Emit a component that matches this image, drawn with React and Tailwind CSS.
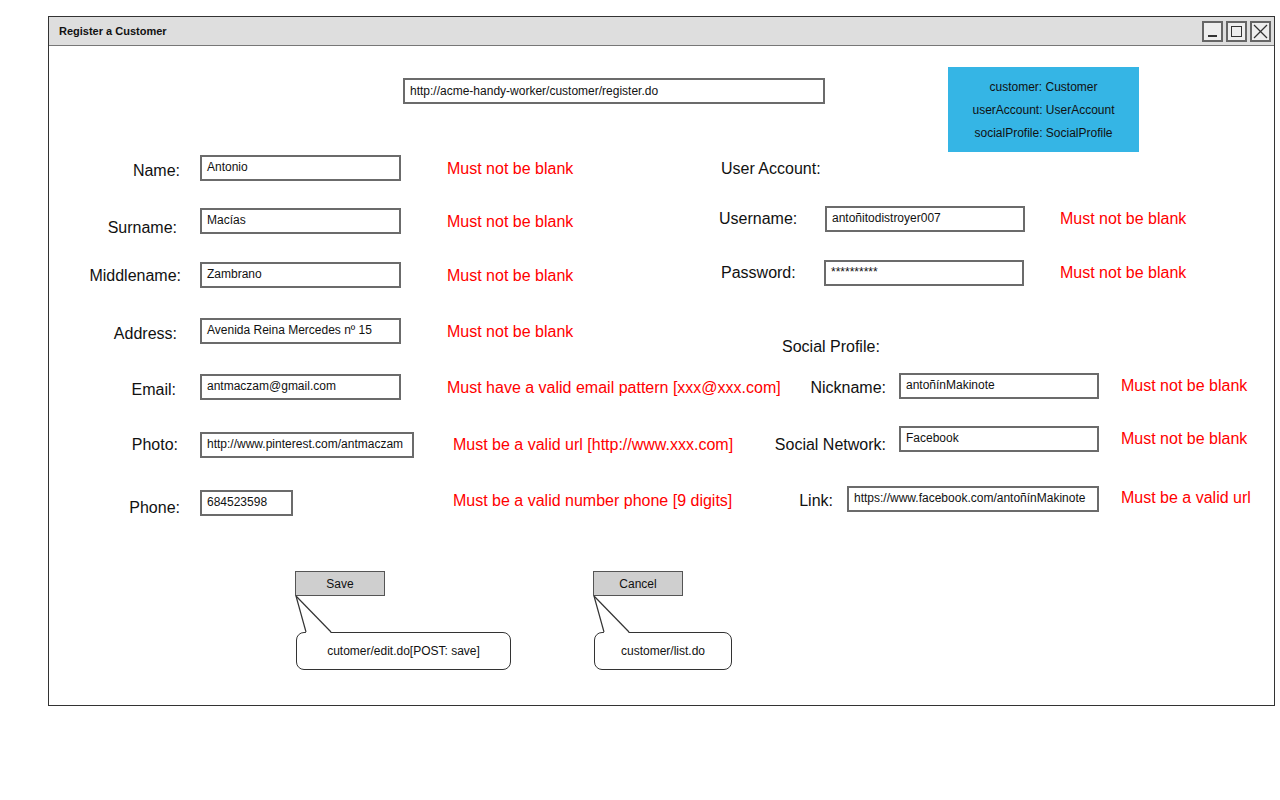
import React from "react";

const font = "font-['Liberation_Sans',Arial,sans-serif]";

function Field({ value, className = "" }) {
  return (
    <div
      className={`h-[26px] shrink-0 border-2 border-[#6b6b6b] bg-white pl-[5px] pb-[3px] flex items-center text-[12px] text-[#111] whitespace-nowrap overflow-hidden ${className}`}
    >
      {value}
    </div>
  );
}

function Label({ children, className = "" }) {
  return (
    <div className={`shrink-0 text-[16px] leading-[20px] text-[#111] whitespace-nowrap ${className}`}>
      {children}
    </div>
  );
}

function Err({ children, className = "" }) {
  return (
    <div className={`shrink-0 text-[16px] leading-[20px] text-[#ff0000] whitespace-nowrap ${className}`}>
      {children}
    </div>
  );
}

function Callout({ label, note, noteWidth }) {
  return (
    <div className="relative flex flex-col">
      <div className="w-[90px] h-[25px] bg-[#cfcfcf] border-[1.5px] border-[#555] flex items-center justify-center text-[12px] text-[#111]">
        {label}
      </div>
      <div
        className={`mt-[36px] ml-[1px] h-[38px] border-[1.5px] border-[#333] rounded-[8px] bg-white flex items-center justify-center text-[12px] text-[#111] ${noteWidth}`}
      >
        {note}
      </div>
      <svg
        className="absolute left-0 top-[24px]"
        width="40"
        height="38"
        viewBox="0 0 40 38"
      >
        <polygon points="1,1 11,38 36,38" fill="white" />
        <line x1="1" y1="1" x2="11" y2="37" stroke="#333" strokeWidth="1.2" />
        <line x1="1" y1="1" x2="36" y2="37" stroke="#333" strokeWidth="1.2" />
      </svg>
    </div>
  );
}

export default function App() {
  return (
    <div className={`w-[1280px] h-[800px] bg-white ${font}`}>
      <div className="pt-[16px] pl-[48px]">
        <div className="w-[1227px] h-[690px] border-[1.5px] border-[#333] flex flex-col">
          {/* title bar */}
          <div className="h-[29px] bg-[#dedede] border-b border-[#777] flex items-center justify-between pl-[10px] pr-[3px]">
            <span className="text-[11px] font-bold text-[#111]">Register a Customer</span>
            <div className="flex gap-[3px]">
              <div className="w-[21px] h-[21px] border-2 border-[#666] bg-[#eee] flex items-end justify-center pb-[3px]">
                <div className="w-[9px] h-[2px] bg-[#333]" />
              </div>
              <div className="w-[21px] h-[21px] border-2 border-[#666] bg-[#eee] flex items-center justify-center">
                <div className="w-[11px] h-[11px] border-[1.5px] border-[#333]" />
              </div>
              <div className="w-[21px] h-[21px] border-2 border-[#666] bg-[#eee] flex items-center justify-center">
                <svg width="15" height="15" viewBox="0 0 15 15">
                  <line x1="1" y1="1" x2="14" y2="14" stroke="#333" strokeWidth="1.3" />
                  <line x1="14" y1="1" x2="1" y2="14" stroke="#333" strokeWidth="1.3" />
                </svg>
              </div>
            </div>
          </div>

          {/* top row: url + data box */}
          <div className="pt-[21px] flex items-start">
            <div className="ml-[354px] mt-[11px] w-[422px] h-[26px] border-2 border-[#6b6b6b] pl-[5px] flex items-center text-[12px] text-[#111]">
              http://acme-handy-worker/customer/register.do
            </div>
            <div className="ml-[123px] w-[191px] h-[85px] bg-[#35b5e5] flex flex-col items-center justify-center gap-[7px] text-[12px] leading-[16px] text-[#111]">
              <span>customer: Customer</span>
              <span>userAccount: UserAccount</span>
              <span>socialProfile: SocialProfile</span>
            </div>
          </div>

          {/* form rows */}
          <div className="mt-[3px] flex flex-col">
            <div className="h-[51px] flex items-start">
              <div className="w-[672px] shrink-0 flex items-start">
                <Label className="w-[132px] text-right pr-[1px] mt-[6px]">Name:</Label>
                <Field value="Antonio" className="ml-[19px] w-[201px]" />
                <Err className="ml-[46px] mt-[4px]">Must not be blank</Err>
              </div>
              <Label className="mt-[4px]">User Account:</Label>
            </div>

            <div className="h-[54px] flex items-start">
              <div className="w-[672px] shrink-0 flex items-start">
                <Label className="w-[132px] text-right pr-[4px] mt-[12px]">Surname:</Label>
                <Field value="Macías" className="ml-[19px] w-[201px] mt-[2px]" />
                <Err className="ml-[46px] mt-[6px]">Must not be blank</Err>
              </div>
              <Label className="w-[104px] -ml-[2px] mt-[3px]">Username:</Label>
              <Field value="antoñitodistroyer007" className="ml-[2px] w-[200px]" />
              <Err className="ml-[35px] mt-[3px]">Must not be blank</Err>
            </div>

            <div className="h-[58px] flex items-start">
              <div className="w-[672px] shrink-0 flex items-start">
                <Label className="w-[132px] text-right mt-[6px]">Middlename:</Label>
                <Field value="Zambrano" className="ml-[19px] w-[201px] mt-[2px]" />
                <Err className="ml-[46px] mt-[6px]">Must not be blank</Err>
              </div>
              <Label className="w-[103px] mt-[3px]">Password:</Label>
              <Field value="**********" className="w-[200px]" />
              <Err className="ml-[36px] mt-[3px]">Must not be blank</Err>
            </div>

            <div className="h-[55px] flex items-start">
              <div className="w-[672px] shrink-0 flex items-start">
                <Label className="w-[132px] text-right pr-[4px] mt-[6px]">Address:</Label>
                <Field value="Avenida Reina Mercedes nº 15" className="ml-[19px] w-[201px]" />
                <Err className="ml-[46px] mt-[4px]">Must not be blank</Err>
              </div>
              <Label className="ml-[61px] mt-[19px]">Social Profile:</Label>
            </div>

            <div className="h-[53px] flex items-start">
              <div className="w-[672px] shrink-0 flex items-start">
                <Label className="w-[132px] text-right pr-[5px] mt-[7px]">Email:</Label>
                <Field value="antmaczam@gmail.com" className="ml-[19px] w-[201px] mt-[1px]" />
                <Err className="ml-[46px] mt-[5px]">Must have a valid email pattern [xxx@xxx.com]</Err>
              </div>
              <Label className="w-[165px] text-right mt-[5px]">Nickname:</Label>
              <Field value="antoñínMakinote" className="ml-[13px] w-[200px]" />
              <Err className="ml-[22px] mt-[3px]">Must not be blank</Err>
            </div>

            <div className="h-[60px] flex items-start">
              <div className="w-[672px] shrink-0 flex items-start">
                <Label className="w-[132px] text-right pr-[3px] mt-[9px]">Photo:</Label>
                <Field value="http://www.pinterest.com/antmaczam" className="ml-[19px] w-[214px] mt-[6px]" />
                <Err className="ml-[39px] mt-[9px]">Must be a valid url [http://www.xxx.com]</Err>
              </div>
              <Label className="w-[165px] text-right mt-[9px]">Social Network:</Label>
              <Field value="Facebook" className="ml-[13px] w-[200px]" />
              <Err className="ml-[22px] mt-[3px]">Must not be blank</Err>
            </div>

            <div className="h-[85px] flex items-start">
              <div className="w-[672px] shrink-0 flex items-start">
                <Label className="w-[132px] text-right pr-[1px] mt-[12px]">Phone:</Label>
                <Field value="684523598" className="ml-[19px] w-[93px] mt-[4px]" />
                <Err className="ml-[160px] mt-[5px]">Must be a valid number phone [9 digits]</Err>
              </div>
              <Label className="w-[112px] text-right mt-[5px]">Link:</Label>
              <Field value="https://www.facebook.com/antoñínMakinote" className="ml-[14px] w-[252px]" />
              <Err className="ml-[22px] mt-[2px]">Must be a valid url</Err>
            </div>
          </div>

          {/* buttons with callouts */}
          <div className="flex items-start pl-[246px]">
            <div className="w-[298px] shrink-0">
              <Callout label="Save" note="cutomer/edit.do[POST: save]" noteWidth="w-[215px]" />
            </div>
            <Callout label="Cancel" note="customer/list.do" noteWidth="w-[138px]" />
          </div>
        </div>
      </div>
    </div>
  );
}
